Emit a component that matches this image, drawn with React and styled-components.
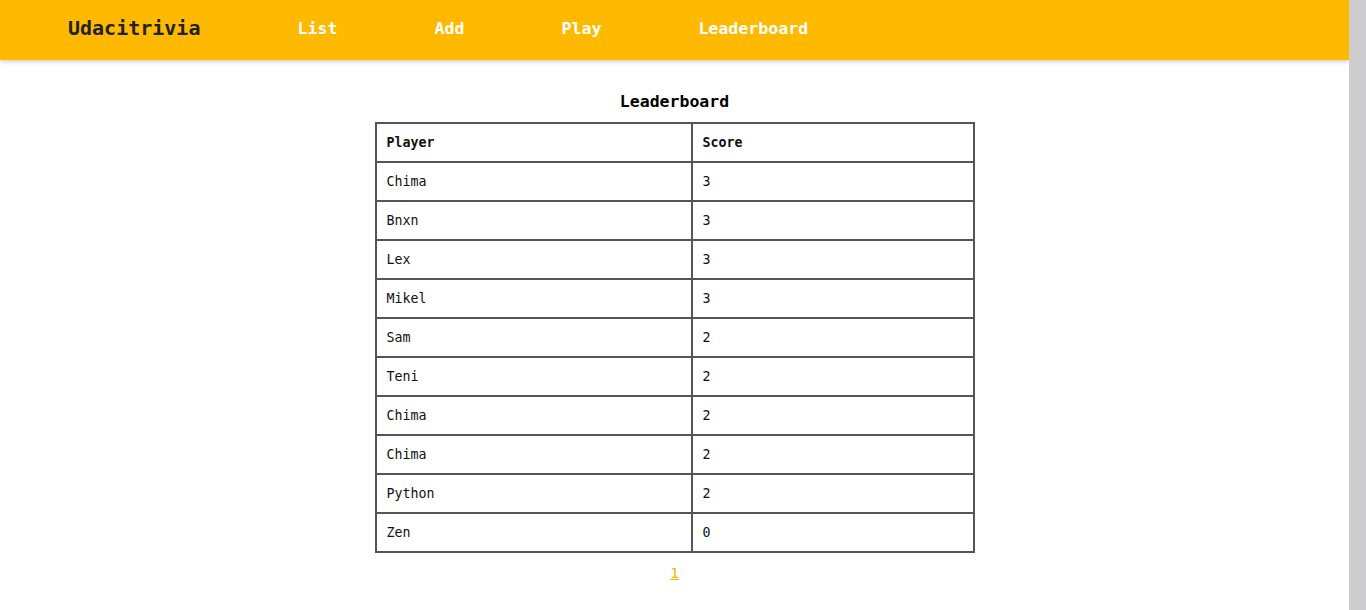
import React from 'react';
import styled, { createGlobalStyle } from 'styled-components';

const GlobalStyle = createGlobalStyle`
  html {
    margin: 0;
    padding: 0;
    background: #cdcdd0;
  }
  body {
    margin: 0 17px 0 0;
    padding: 0;
    min-height: 100vh;
    background: #fff;
    font-family: "DejaVu Sans Mono", "Liberation Mono", monospace;
  }
`;

const Header = styled.header`
  height: 60px;
  box-sizing: border-box;
  padding: 0 0 4px 68px;
  background: #ffb900;
  display: flex;
  align-items: center;
  gap: 97px;
  box-shadow: 0 2px 4px rgba(0, 0, 0, 0.18);
`;

const Logo = styled.h1`
  margin: 0;
  font-size: 20px;
  font-weight: bold;
  color: #222;
`;

const NavItem = styled.a`
  font-size: 16.6px;
  font-weight: bold;
  color: #fff;
  text-decoration: none;
  cursor: pointer;
`;

const Main = styled.main`
  display: flex;
  flex-direction: column;
  align-items: center;
  padding: 32px 0 40px;
`;

const Title = styled.h2`
  margin: 0 0 10px;
  font-size: 16.5px;
  font-weight: bold;
  color: #000;
  line-height: 20px;
`;

const Table = styled.table`
  width: 600px;
  border-collapse: collapse;
  font-size: 13.3px;
  color: #111;
`;

const Cell = styled.td`
  border: 2px solid #555;
  height: 37px;
  padding: 0 10px;
  text-align: left;
  width: ${props => props.$w || 'auto'};
  font-weight: ${props => (props.$head ? 'bold' : 'normal')};
`;

const Pager = styled.div`
  margin-top: 12px;
  font-size: 14.5px;
`;

const PageLink = styled.a`
  color: #f5b400;
  text-decoration: underline;
  cursor: pointer;
`;

const players = [
  ['Chima', 3],
  ['Bnxn', 3],
  ['Lex', 3],
  ['Mikel', 3],
  ['Sam', 2],
  ['Teni', 2],
  ['Chima', 2],
  ['Chima', 2],
  ['Python', 2],
  ['Zen', 0],
];

const App = () => {
  return (
    <>
      <GlobalStyle />
      <Header>
        <Logo>Udacitrivia</Logo>
        <NavItem>List</NavItem>
        <NavItem>Add</NavItem>
        <NavItem>Play</NavItem>
        <NavItem>Leaderboard</NavItem>
      </Header>
      <Main>
        <Title>Leaderboard</Title>
        <Table>
          <thead>
            <tr>
              <Cell as="th" $head $w="294px">Player</Cell>
              <Cell as="th" $head>Score</Cell>
            </tr>
          </thead>
          <tbody>
            {players.map(([name, score], i) => (
              <tr key={i}>
                <Cell>{name}</Cell>
                <Cell>{score}</Cell>
              </tr>
            ))}
          </tbody>
        </Table>
        <Pager>
          <PageLink>1</PageLink>
        </Pager>
      </Main>
    </>
  );
};

export default App;
